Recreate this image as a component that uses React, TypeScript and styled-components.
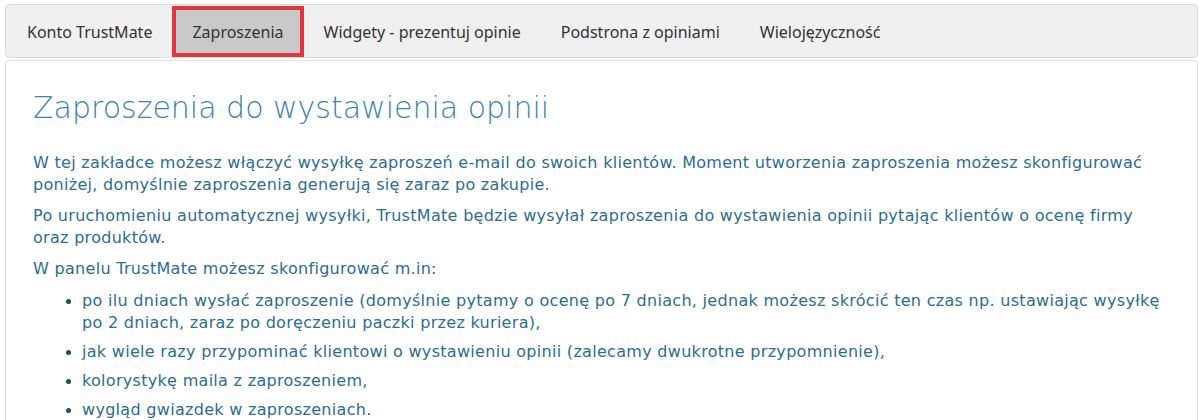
import React, {FC} from "react";
import styled, {createGlobalStyle} from "styled-components";

const GlobalStyle = createGlobalStyle`
  html, body {
    margin: 0;
    padding: 0;
    background: #ffffff;
  }
  * { box-sizing: border-box; }
`

const PageStyled = styled.div`
  padding: 4px 1px 0 5px;
  display: flex;
  flex-direction: column;
  gap: 2px;
`

const TabBarStyled = styled.nav`
  display: flex;
  align-items: stretch;
  height: 54px;
  background: #f0f0f0;
  border: 1px solid #dcdcdc;
  border-radius: 4px;
  padding: 1px 0 0 1px;
`

const TabStyled = styled.a<{ $active?: boolean }>`
  display: flex;
  align-items: center;
  padding: 0 16px;
  border: 4px solid ${({$active}) => $active ? '#e2363f' : 'transparent'};
  background: ${({$active}) => $active ? '#c9c9c9' : 'transparent'};
  font-family: "Noto Sans", "Open Sans", sans-serif;
  font-size: 16px;
  color: #333333;
  text-decoration: none;
  cursor: pointer;
`

const CardStyled = styled.section`
  background: #ffffff;
  border: 1px solid #e2e2e2;
  border-bottom: none;
  border-radius: 4px 4px 0 0;
  padding: 27px 27px 0 27px;
  min-height: 400px;
`

const TitleStyled = styled.h1`
  margin: 0 0 24px;
  font-family: "DejaVu Sans", sans-serif;
  font-weight: 200;
  font-size: 30px;
  line-height: 40px;
  color: #3c84ae;
`

const TextStyled = styled.p`
  margin: 0 0 9px;
  font-family: "DejaVu Sans", sans-serif;
  font-size: 16px;
  letter-spacing: 0.3px;
  line-height: 22px;
  color: #2b6e8e;
`

const ListStyled = styled.ul`
  margin: 10px 0 0;
  padding-left: 49px;
  font-family: "DejaVu Sans", sans-serif;
  font-size: 16px;
  letter-spacing: 0.3px;
  line-height: 22px;
  color: #2b6e8e;

  li {
    margin-bottom: 7px;
  }

  li::marker {
    color: #1f4f66;
    font-size: 15px;
  }
`

const tabs = [
  'Konto TrustMate',
  'Zaproszenia',
  'Widgety - prezentuj opinie',
  'Podstrona z opiniami',
  'Wielojęzyczność',
]

const options = [
  'po ilu dniach wysłać zaproszenie (domyślnie pytamy o ocenę po 7 dniach, jednak możesz skrócić ten czas np. ustawiając wysyłkę po 2 dniach, zaraz po doręczeniu paczki przez kuriera),',
  'jak wiele razy przypominać klientowi o wystawieniu opinii (zalecamy dwukrotne przypomnienie),',
  'kolorystykę maila z zaproszeniem,',
  'wygląd gwiazdek w zaproszeniach.',
]

const App: FC = () => (
  <PageStyled>
    <GlobalStyle/>
    <TabBarStyled>
      {tabs.map(tab => (
        <TabStyled key={tab} $active={tab === 'Zaproszenia'}>{tab}</TabStyled>
      ))}
    </TabBarStyled>
    <CardStyled>
      <TitleStyled>Zaproszenia do wystawienia opinii</TitleStyled>
      <TextStyled>
        W tej zakładce możesz włączyć wysyłkę zaproszeń e-mail do swoich klientów. Moment utworzenia zaproszenia możesz skonfigurować poniżej, domyślnie zaproszenia generują się zaraz po zakupie.
      </TextStyled>
      <TextStyled>
        Po uruchomieniu automatycznej wysyłki, TrustMate będzie wysyłał zaproszenia do wystawienia opinii pytając klientów o ocenę firmy oraz produktów.
      </TextStyled>
      <TextStyled>W panelu TrustMate możesz skonfigurować m.in:</TextStyled>
      <ListStyled>
        {options.map(o => <li key={o}>{o}</li>)}
      </ListStyled>
    </CardStyled>
  </PageStyled>
)

export default App
